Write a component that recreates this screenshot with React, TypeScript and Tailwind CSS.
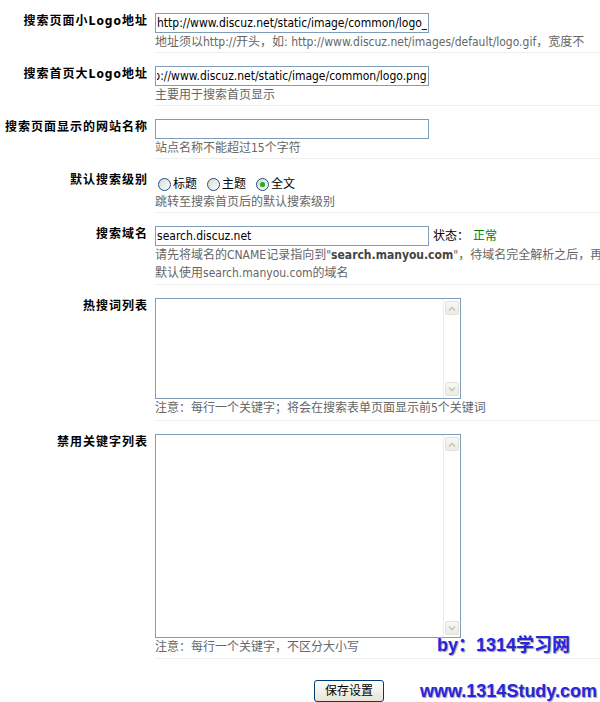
import React, { useEffect, useRef } from 'react';

// Tahoma-like widths: DejaVu Sans Condensed for latin, Noto for the chinese
const FONT = '"DejaVu Sans Condensed", "Noto Sans CJK SC", sans-serif';
const MARK_FONT = '"Liberation Sans", "Noto Sans CJK SC", sans-serif';

interface RowProps {
    label: string;
    children: React.ReactNode;
    pb?: string;
}

const SettingRow: React.FC<RowProps> = ({ label, children, pb = 'pb-[1px]' }) => (
    <div className="flex">
        <div className="w-[148px] shrink-0 pt-[13px] text-right font-bold tracking-[1px] leading-[16px] text-black whitespace-nowrap">
            {label}
        </div>
        <div className={`ml-[7px] flex-1 min-w-0 pt-[13px] ${pb} border-b border-[#eeeeee]`}>{children}</div>
    </div>
);

const Hint: React.FC<{ children: React.ReactNode }> = ({ children }) => (
    <div className="text-[#666666] leading-[18px] whitespace-nowrap">{children}</div>
);

const TextInput: React.FC<{ value: string; scrollEnd?: boolean }> = ({ value, scrollEnd }) => {
    const ref = useRef<HTMLInputElement>(null);

    useEffect(() => {
        // the big logo field is shown scrolled to its end, like in the browser after typing
        if (scrollEnd && ref.current) ref.current.scrollLeft = ref.current.scrollWidth;
    }, [scrollEnd]);

    return (
        <input
            ref={ref}
            type="text"
            readOnly
            defaultValue={value}
            className="block w-[274px] h-[20px] border border-[#7f9db9] bg-white px-[1px] text-[12px] leading-[18px] text-black outline-none"
            style={{ fontFamily: FONT }}
        />
    );
};

const Radio: React.FC<{ checked?: boolean; label: string }> = ({ checked, label }) => (
    <span className="flex items-center mr-[10px]">
        <span className="relative w-[13px] h-[13px] rounded-full border border-[#1c5180] bg-gradient-to-br from-[#d8d8d2] to-white flex items-center justify-center">
            {checked && <span className="w-[5px] h-[5px] rounded-full bg-[#2ca82c] shadow-[0_0_1px_#7fd07f]" />}
        </span>
        <span className="ml-[2px] leading-[16px] text-black">{label}</span>
    </span>
);

const ArrowBox: React.FC<{ up?: boolean }> = ({ up }) => (
    <div className="w-[14px] h-[14px] rounded-[2px] border border-[#e3e2da] bg-gradient-to-b from-[#f8f8f4] to-[#ecebe4] flex items-center justify-center">
        <svg width="8" height="5" viewBox="0 0 8 5">
            <polyline
                points={up ? '1,4.5 4,1.5 7,4.5' : '1,0.5 4,3.5 7,0.5'}
                fill="none"
                stroke="#c6c6be"
                strokeWidth="1.6"
            />
        </svg>
    </div>
);

const FakeTextarea: React.FC<{ height: string }> = ({ height }) => (
    <div className={`flex w-[306px] ${height} border border-[#7f9db9] bg-white`}>
        <textarea className="flex-1 resize-none outline-none bg-white" />
        <div className="w-[17px] border-l border-[#efeee8] pl-[1px] pr-[1px] py-[2px] flex flex-col justify-between">
            <ArrowBox up />
            <ArrowBox />
        </div>
    </div>
);

const App: React.FC = () => {
    return (
        <div className="relative w-[600px] h-[702px] overflow-hidden bg-white text-[12px]" style={{ fontFamily: FONT }}>
            <SettingRow label="搜索页面小Logo地址">
                <TextInput value="http://www.discuz.net/static/image/common/logo_sc_s.png" />
                <Hint>地址须以http://开头，如: http://www.discuz.net/images/default/logo.gif，宽度不</Hint>
            </SettingRow>

            <SettingRow label="搜索首页大Logo地址">
                <TextInput value="http://www.discuz.net/static/image/common/logo.png" scrollEnd />
                <Hint>主要用于搜索首页显示</Hint>
            </SettingRow>

            <SettingRow label="搜索页面显示的网站名称">
                <TextInput value="" />
                <Hint>站点名称不能超过15个字符</Hint>
            </SettingRow>

            <SettingRow label="默认搜索级别">
                <div className="flex items-center h-[21px] pt-[3px] pl-[3px]">
                    <Radio label="标题" />
                    <Radio label="主题" />
                    <Radio label="全文" checked />
                </div>
                <Hint>跳转至搜索首页后的默认搜索级别</Hint>
            </SettingRow>

            <SettingRow label="搜索域名" pb="pb-[2px]">
                <div className="flex items-center">
                    <TextInput value="search.discuz.net" />
                    <span className="ml-[4px] text-black whitespace-nowrap">状态：</span>
                    <span className="ml-[4px] text-[#008000] whitespace-nowrap">正常</span>
                </div>
                <Hint>
                    请先将域名的CNAME记录指向到"<b className="text-[#444444]">search.manyou.com</b>"，待域名完全解析之后，再
                </Hint>
                <Hint>默认使用search.manyou.com的域名</Hint>
            </SettingRow>

            <SettingRow label="热搜词列表" pb="pb-[3px]">
                <FakeTextarea height="h-[101px]" />
                <Hint>注意：每行一个关键字；将会在搜索表单页面显示前5个关键词</Hint>
            </SettingRow>

            <SettingRow label="禁用关键字列表" pb="pb-[2px]">
                <FakeTextarea height="h-[204px]" />
                <Hint>注意：每行一个关键字，不区分大小写</Hint>
            </SettingRow>

            <div className="pl-[314px] pt-[21px]">
                <button
                    type="button"
                    className="w-[70px] h-[22px] border border-[#003c74] rounded-[3px] bg-gradient-to-b from-white to-[#e6e3d6] text-[12px] leading-[18px] text-black"
                >
                    保存设置
                </button>
            </div>

            {/* watermark pasted over the screenshot */}
            <div
                className="absolute left-[437px] top-[634px] text-[18px] font-bold leading-[22px] text-[#2626e0] whitespace-nowrap [text-shadow:1px_1px_1px_#9a9a9a,0_0_2px_#ffffff]"
                style={{ fontFamily: MARK_FONT }}
            >
                by：1314学习网
            </div>
            <div
                className="absolute left-[420px] top-[680px] text-[18px] font-bold leading-[22px] text-[#2626e0] whitespace-nowrap [text-shadow:1px_1px_1px_#9a9a9a,0_0_2px_#ffffff]"
                style={{ fontFamily: MARK_FONT }}
            >
                www.1314Study.com
            </div>
        </div>
    );
};

export default App;
